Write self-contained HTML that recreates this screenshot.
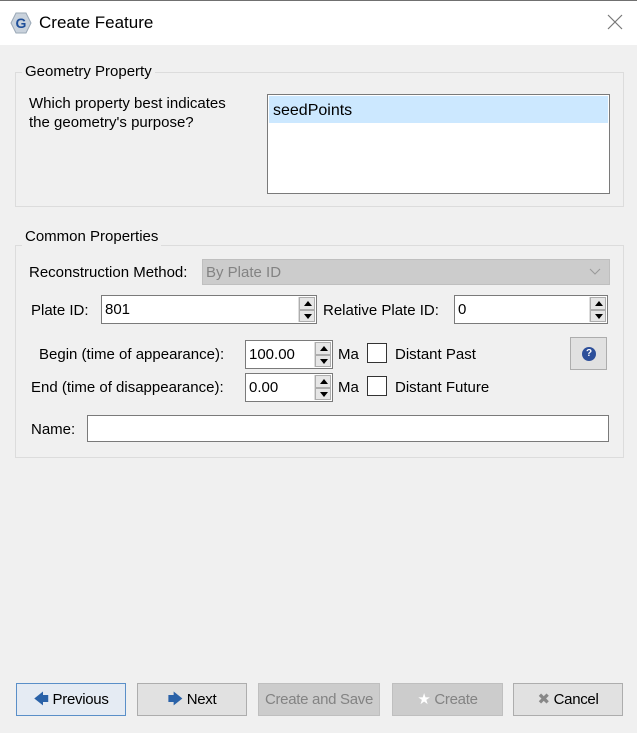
<!DOCTYPE html>
<html><head><style>
*{box-sizing:border-box;margin:0;padding:0}
body{width:637px;height:733px;background:#f0f0f0;font-family:"Liberation Sans",sans-serif;font-size:15px;color:#000;position:relative;overflow:hidden}
.a{position:absolute}
.t{position:absolute;white-space:nowrap;line-height:18px}
.grp{position:absolute;border:1px solid #dcdcdc}
.gl{position:absolute;background:#f0f0f0;padding:0 3px;line-height:18px}
.in{position:absolute;background:#fff;border:1px solid #7a7a7a;line-height:27px;padding-left:3px}
.sp{position:absolute;right:1px;top:1px;width:17px;bottom:1px;border-left:1px solid #ddd}
.sp div{height:50%;border:1px solid #adadad;background:#e6e6e6;position:relative}
.up:after,.dn:after{content:"";position:absolute;left:4px;border-left:4px solid transparent;border-right:4px solid transparent}
.up:after{top:3px;border-bottom:5px solid #000}
.dn:after{top:3px;border-top:5px solid #000}
.cb{position:absolute;width:20px;height:20px;background:#fff;border:1px solid #333}
.btn{position:absolute;top:683px;height:33px;border:1px solid #adadad;background:#e1e1e1;text-align:center;line-height:31px;font-size:15px;white-space:nowrap;letter-spacing:-0.3px;overflow:hidden}
</style></head><body>
<div class="a" style="left:0;top:0;width:637px;height:45px;background:#fff;border-top:1px solid #707070"></div>
<svg class="a" style="left:9px;top:11px" width="24" height="24" viewBox="0 0 24 24"><polygon points="7,2 17,2 22,12 17,22 7,22 2,12" fill="#c9d2dc" stroke="#9aa8b6"/><text x="12" y="17" text-anchor="middle" font-family="Liberation Sans" font-weight="bold" font-size="14" fill="#1f4f9a">G</text></svg>
<div class="t" style="left:39px;top:14px;font-size:17px">Create Feature</div>
<svg class="a" style="left:607px;top:14px" width="16" height="16"><path d="M1 1L15 15M15 1L1 15" stroke="#777" stroke-width="1.2"/></svg>

<div class="grp" style="left:15px;top:72px;width:609px;height:135px"></div>
<div class="gl" style="left:22px;top:63px">Geometry Property</div>
<div class="t" style="left:29px;top:95px">Which property best indicates</div>
<div class="t" style="left:29px;top:114px">the geometry's purpose?</div>
<div class="a" style="left:267px;top:94px;width:343px;height:100px;background:#fff;border:1px solid #7a7a7a"><div style="margin:1px;height:27px;background:#cce8ff;line-height:30px;padding-left:4px;font-size:16px">seedPoints</div></div>

<div class="grp" style="left:15px;top:245px;width:609px;height:213px"></div>
<div class="gl" style="left:22px;top:228px">Common Properties</div>
<div class="t" style="left:29px;top:264px">Reconstruction Method:</div>
<div class="a" style="left:202px;top:259px;width:408px;height:26px;background:#ccc;border:1px solid #bfbfbf;color:#838383;line-height:25px;padding-left:3px">By Plate ID<svg class="a" style="right:8px;top:8px" width="12" height="8"><path d="M1 1L6 6L11 1" stroke="#999" fill="none"/></svg></div>

<div class="t" style="left:31px;top:302px">Plate ID:</div>
<div class="in" style="left:101px;top:295px;width:216px;height:29px">801<div class="sp"><div class="up"></div><div class="dn"></div></div></div>
<div class="t" style="left:323px;top:302px">Relative Plate ID:</div>
<div class="in" style="left:454px;top:295px;width:154px;height:29px">0<div class="sp"><div class="up"></div><div class="dn"></div></div></div>

<div class="t" style="left:39px;top:346px">Begin (time of appearance):</div>
<div class="in" style="left:245px;top:340px;width:88px;height:29px">100.00<div class="sp"><div class="up"></div><div class="dn"></div></div></div>
<div class="t" style="left:338px;top:346px">Ma</div>
<div class="cb" style="left:367px;top:343px"></div>
<div class="t" style="left:395px;top:346px">Distant Past</div>
<div class="a" style="left:570px;top:337px;width:37px;height:33px;background:#e1e1e1;border:1px solid #adadad"><div class="a" style="left:11px;top:9px;width:14px;height:14px;border-radius:50%;background:#2d4f9a;color:#fff;font-size:10px;font-weight:bold;text-align:center;line-height:14px">?</div></div>

<div class="t" style="left:31px;top:379px">End (time of disappearance):</div>
<div class="in" style="left:245px;top:373px;width:88px;height:29px">0.00<div class="sp"><div class="up"></div><div class="dn"></div></div></div>
<div class="t" style="left:338px;top:379px">Ma</div>
<div class="cb" style="left:367px;top:376px"></div>
<div class="t" style="left:395px;top:379px">Distant Future</div>

<div class="t" style="left:31px;top:421px">Name:</div>
<div class="in" style="left:87px;top:415px;width:522px;height:27px"></div>

<div class="btn" style="left:16px;width:110px;border-color:#5a8fc8;background:#e5ebf3"><span style="color:#2a62a8">&#129092;</span> Previous</div>
<div class="btn" style="left:137px;width:110px"><span style="color:#2a62a8">&#129094;</span> Next</div>
<div class="btn" style="left:258px;width:122px;background:#cccccc;border-color:#bfbfbf;color:#838383">Create and Save</div>
<div class="btn" style="left:392px;width:111px;background:#cccccc;border-color:#bfbfbf;color:#838383"><span style="color:#fff">&#9733;</span> Create</div>
<div class="btn" style="left:513px;width:110px"><span style="color:#888">&#10006;</span> Cancel</div>
</body></html>
